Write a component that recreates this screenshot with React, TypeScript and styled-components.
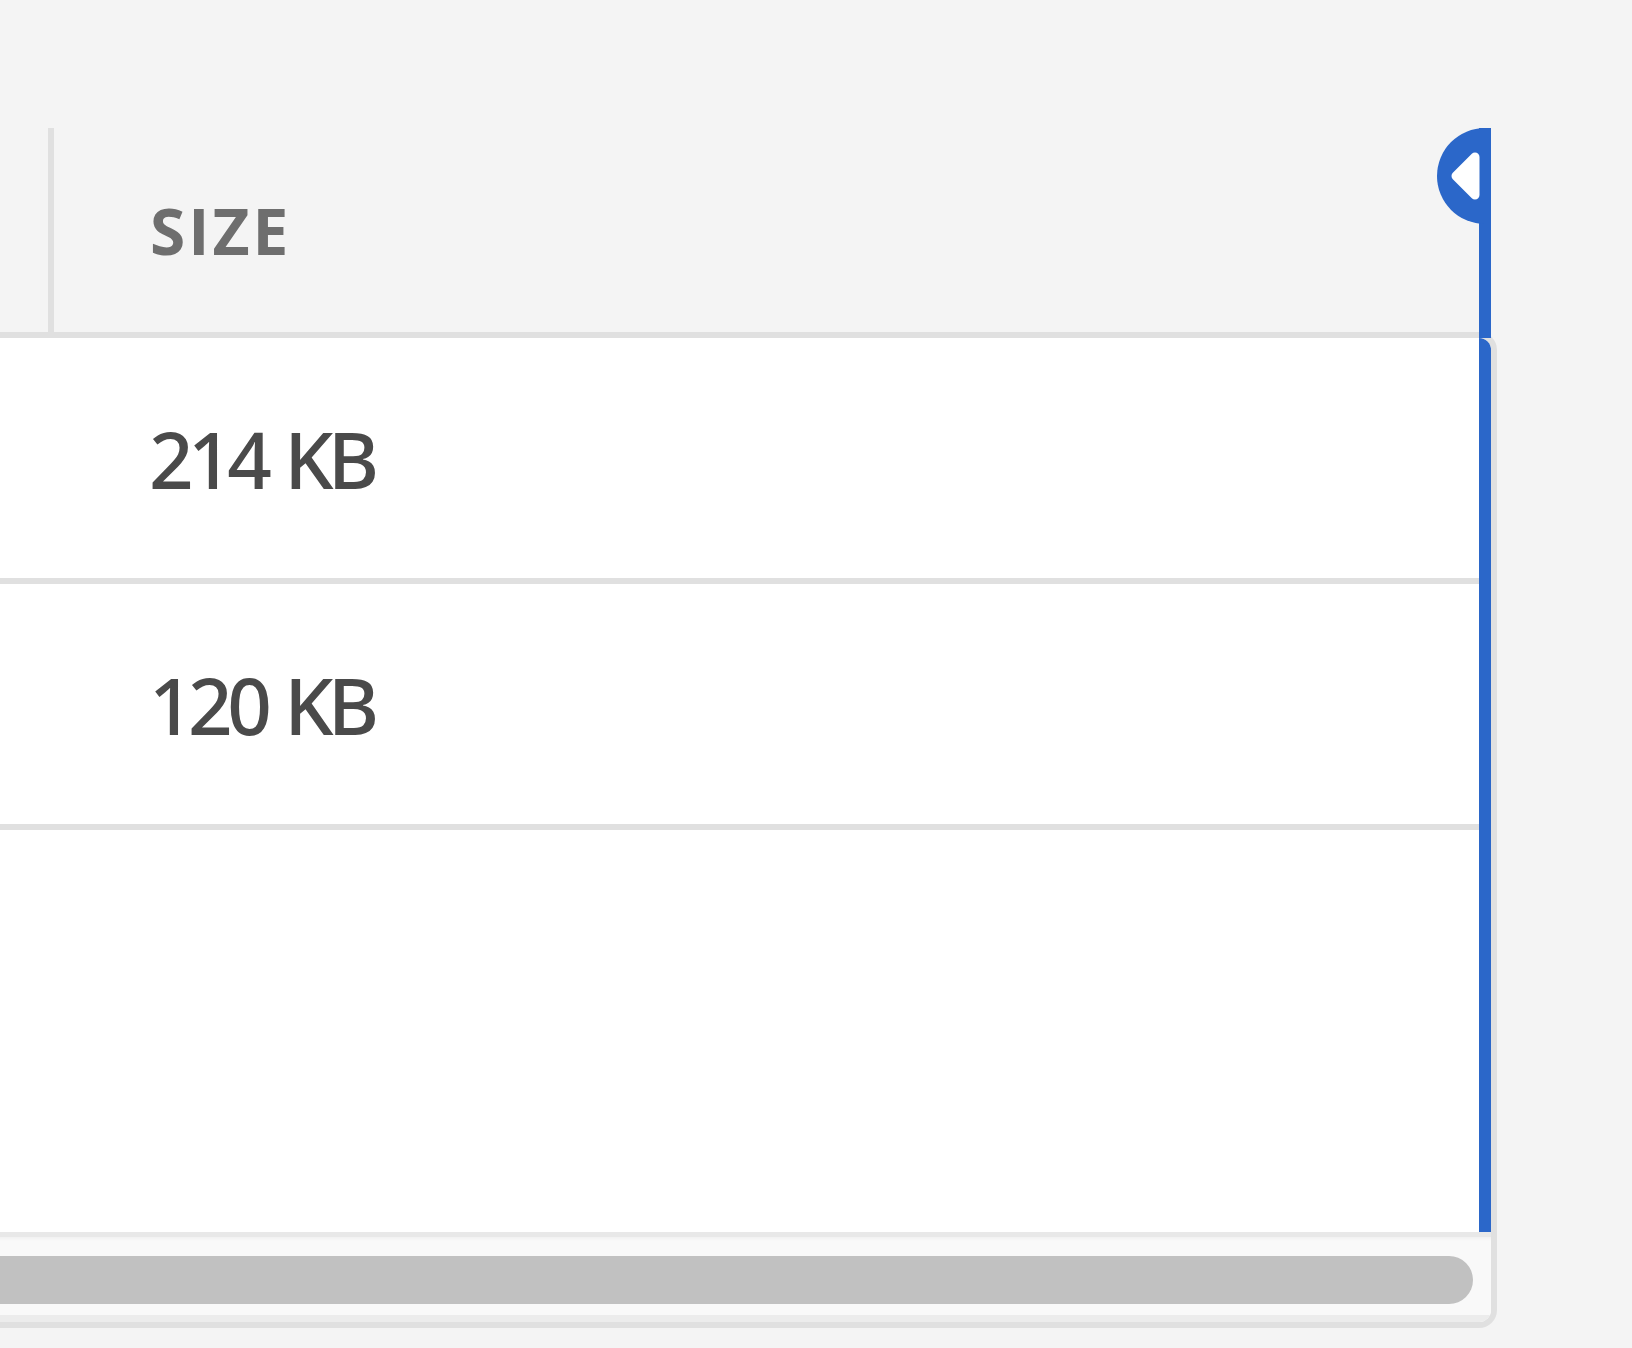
import React from "react";
import styled, { createGlobalStyle } from "styled-components";

const GlobalStyle = createGlobalStyle`
  html, body {
    margin: 0;
    padding: 0;
    background: #f4f4f4;
    font-family: "Open Sans", "Noto Sans", sans-serif;
  }
  * { box-sizing: border-box; }
`;

const ACCENT = "#2b67c9";
const LINE = "#e0e0e0";

const Page = styled.div`
  width: 1497px;
  padding-top: 128px;
  height: 1348px;
  overflow: hidden;
`;

const HeaderRow = styled.div`
  position: relative;
  display: flex;
  height: 204px;
  background: #f4f4f4;
`;

const LeadCell = styled.div`
  width: 54px;
  border-right: 6px solid ${LINE};
`;

const HeaderCell = styled.div`
  flex: 1;
  display: flex;
  align-items: center;
  padding-left: 96px;
  font-size: 64px;
  font-weight: 700;
  letter-spacing: 3px;
  text-transform: uppercase;
  color: #6e6e6e;
`;

const ResizeLine = styled.div`
  position: absolute;
  z-index: 2;
  top: 0;
  right: 6px;
  bottom: -6px;
  width: 12px;
  background: ${ACCENT};
`;

const ResizeKnob = styled.div`
  position: absolute;
  z-index: 2;
  top: 0;
  right: 6px;
  width: 54px;
  height: 96px;
  border-radius: 48px 0 0 48px;
  background: ${ACCENT};
  display: flex;
`;

const Frame = styled.div`
  border: 6px solid ${LINE};
  border-left: none;
  border-radius: 0 18px 18px 0;
  overflow: hidden;
  background: #ffffff;
`;

const Viewport = styled.div`
  position: relative;
  height: 894px;
`;

const BodyLine = styled.div`
  position: absolute;
  top: 0;
  right: 0;
  bottom: 0;
  width: 12px;
  background: ${ACCENT};
`;

const Row = styled.div`
  height: 246px;
  display: flex;
  align-items: center;
  padding-left: 149px;
  padding-top: 2px;
  border-bottom: 6px solid ${LINE};
  font-family: "Noto Sans", "Open Sans", sans-serif;
  font-size: 78px;
  font-weight: 500;
  letter-spacing: -5.5px;
  word-spacing: 3px;
  color: #4a4a4a;
`;

const ScrollTrack = styled.div`
  height: 90px;
  background: linear-gradient(#f1f1f1 0, #f9f9f9 4px, #f9f9f9 100%);
  border-top: 5px solid #e8e8e8;
  border-bottom: 7px solid #ececec;
  padding: 19px 18px 11px 0;
`;

const ScrollThumb = styled.div`
  height: 48px;
  background: #c1c1c1;
  border-radius: 0 24px 24px 0;
`;

const rows = ["214 KB", "120 KB"];

export default function App() {
  return (
    <>
      <GlobalStyle />
      <Page>
        <HeaderRow>
          <LeadCell />
          <HeaderCell>Size</HeaderCell>
          <ResizeLine />
          <ResizeKnob>
            <svg width="54" height="96" viewBox="0 0 54 96">
              <polygon
                points="19,48 38,29 38,67"
                fill="#ffffff"
                stroke="#ffffff"
                strokeWidth="9"
                strokeLinejoin="round"
              />
            </svg>
          </ResizeKnob>
        </HeaderRow>
        <Frame>
          <Viewport>
            {rows.map((r) => (
              <Row key={r}>{r}</Row>
            ))}
            <BodyLine />
          </Viewport>
          <ScrollTrack>
            <ScrollThumb />
          </ScrollTrack>
        </Frame>
      </Page>
    </>
  );
}
